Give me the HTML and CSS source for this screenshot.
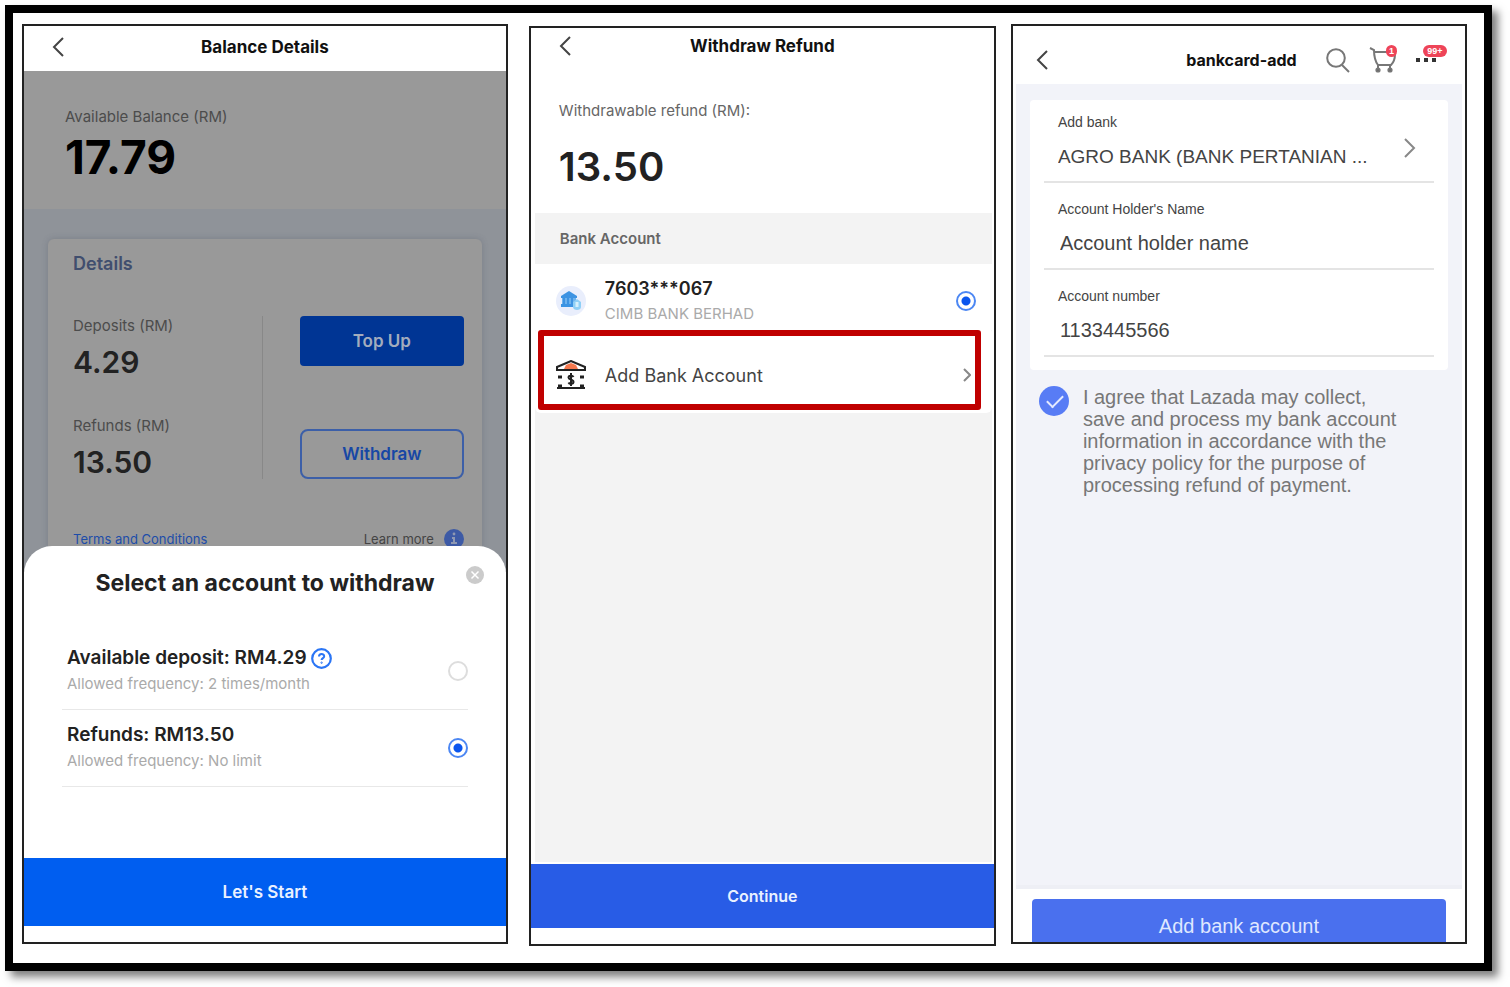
FILE: index.html
```html
<!DOCTYPE html>
<html lang="en">
	<head>
		<meta charset="utf-8">
		<meta name="viewport" content="width=device-width, initial-scale=1">
		<title>Withdraw refund</title>
		<link rel="stylesheet" href="styles.css">
	</head>
	<body>
		<div class="frame">

			<section class="screen balance">
				<header class="bar">
					<button class="back" aria-label="Back">
						<svg width="12" height="20" viewBox="0 0 12 20"><path d="M11 1 2 10l9 9"/></svg>
					</button>
					<h1>Balance Details</h1>
				</header>

				<div class="dim-top">
					<p class="label">Available Balance (RM)</p>
					<p class="total">17.79</p>
				</div>
				<div class="dim-body">
					<div class="details">
						<h2>Details</h2>
						<div class="split">
							<div class="amounts">
								<p class="label">Deposits (RM)</p>
								<p class="amount">4.29</p>
								<p class="label">Refunds (RM)</p>
								<p class="amount">13.50</p>
							</div>
							<div class="actions">
								<button class="topup">Top Up</button>
								<button class="withdraw">Withdraw</button>
							</div>
						</div>
						<div class="links">
							<a href="#">Terms and Conditions</a>
							<a href="#" class="learn">Learn more
								<svg width="20" height="20" viewBox="0 0 20 20">
									<circle cx="10" cy="10" r="10" fill="#3d5aa5"/>
									<path d="M8 9h2v5M7 14h6" fill="none" stroke="#8e98b2" stroke-width="2"/>
									<circle cx="10" cy="5" r="1.4" fill="#8e98b2"/>
								</svg>
							</a>
						</div>
					</div>
				</div>

				<form class="sheet">
					<button type="button" class="close" aria-label="Close">
						<svg width="18" height="18" viewBox="0 0 18 18">
							<circle cx="9" cy="9" r="9" fill="#cbcbcb"/>
							<path d="m5.5 5.5 7 7m0-7-7 7" stroke="#fff" stroke-width="1.5"/>
						</svg>
					</button>
					<h2>Select an account to withdraw</h2>
					<label class="option">
						<span class="text">
							<b>Available deposit: RM4.29
								<svg width="21" height="21" viewBox="0 0 21 21" fill="none" stroke="#2a75f5">
									<circle cx="10.5" cy="10.5" r="9.3" stroke-width="2.2"/>
									<path d="M8 8.600c0-3.400 5.200-3.200 5.200-.4 0 1.900-2.600 1.900-2.600 3.900" stroke-width="2"/>
									<circle cx="10.6" cy="14.7" r=".7"/>
								</svg>
							</b>
							<small>Allowed frequency: 2 times/month</small>
						</span>
						<input type="radio" name="account">
					</label>
					<label class="option">
						<span class="text">
							<b>Refunds: RM13.50</b>
							<small>Allowed frequency: No limit</small>
						</span>
						<input type="radio" name="account" checked>
					</label>
				</form>
				<button class="start">Let's Start</button>
			</section>

			<section class="screen refund">
				<header class="bar">
					<button class="back" aria-label="Back">
						<svg width="12" height="20" viewBox="0 0 12 20"><path d="M11 1 2 10l9 9"/></svg>
					</button>
					<h1>Withdraw Refund</h1>
				</header>
				<div class="refund-total">
					<p class="label">Withdrawable refund (RM):</p>
					<p class="total">13.50</p>
				</div>
				<div class="accounts">
					<h2>Bank Account</h2>
					<label class="account">
						<svg width="30" height="30" viewBox="0 0 30 30">
							<circle cx="15" cy="15" r="15" fill="#e9eefc"/>
							<path d="M5 10l8-5 8 5v2H5z" fill="#3d93e2"/>
							<path d="M6 12h14v7H6z" fill="#6cb2ee"/>
							<path d="M8 12v7m4-7v7m4-7v7" stroke="#3d93e2" stroke-width="2"/>
							<path d="M5 18h17v3H5z" fill="#3b94e4"/>
							<path d="m21 13 4 3v5c0 2-2 3-4 3s-4-1-4-3v-5z" fill="#8fd0f6"/>
							<path d="M21 16v5" stroke="#d5f0fc" stroke-width="3"/>
						</svg>
						<span class="text">
							<b>7603***067</b>
							<small>CIMB BANK BERHAD</small>
						</span>
						<input type="radio" name="bank" checked>
					</label>
					<a href="#" class="add">
						<svg width="30" height="30" viewBox="0 0 30 30" fill="none" stroke="#222" stroke-width="2">
							<path d="M1 10V7l14-6 14 6v3z" fill="#fff"/>
							<path d="m8 9 2-4 5-2 5 2 2 4z" fill="#f5784e" stroke="none"/>
							<path d="M1 10h28"/>
							<path d="M2 17h4m18 0h4M2 26h4m18 0h4" stroke-width="3"/>
							<path d="M1 28h28"/>
							<path d="M17.5 17c-1-2-5-1.500-5 .5 0 2.500 5 1.500 5 4.500 0 2-4 2.500-5 .5M15 13v13"/>
						</svg>
						<span>Add Bank Account</span>
						<svg class="go" width="8" height="14" viewBox="0 0 8 14"><path d="m1 1 6 6-6 6"/></svg>
					</a>
				</div>
				<button class="continue">Continue</button>
			</section>

			<section class="screen bankcard">
				<header class="bar">
					<button class="back" aria-label="Back">
						<svg width="12" height="20" viewBox="0 0 12 20"><path d="M11 1 2 10l9 9"/></svg>
					</button>
					<h1>bankcard-add</h1>
					<nav class="tools">
						<button aria-label="Search">
							<svg width="24" height="26" viewBox="0 0 24 26"><circle cx="10" cy="11" r="8.8"/><path d="m16 18 7 7"/></svg>
						</button>
						<button aria-label="Cart">
							<svg width="28" height="28" viewBox="0 0 28 28">
								<path d="m1 2 4 2c0 6 1 11 4 15h13c3-3 4-7 4-11M5 6h14"/>
								<path d="M9 19v3m12-3v3"/>
								<circle cx="9" cy="24" r="1.6" fill="#555"/>
								<circle cx="21" cy="24" r="1.6" fill="#555"/>
							</svg>
							<span class="badge">1</span>
						</button>
						<button aria-label="More">
							<svg width="20" height="28" viewBox="0 0 20 28"><path class="dots" d="M0 14h4m4 0h4m4 0h4"/></svg>
							<span class="badge more">99+</span>
						</button>
					</nav>
				</header>
				<form class="bank-form">
					<div class="fields">
						<div class="field">
							<label for="bank-name">Add bank</label>
							<select id="bank-name">
								<option>AGRO BANK (BANK PERTANIAN ...</option>
							</select>
							<svg class="go" width="12" height="20" viewBox="0 0 12 20"><path d="m1 1 9 9-9 9"/></svg>
						</div>
						<div class="field">
							<label for="holder">Account Holder's Name</label>
							<input type="text" id="holder" value="Account holder name">
						</div>
						<div class="field">
							<label for="number">Account number</label>
							<input type="text" id="number" value="1133445566">
						</div>
					</div>
					<div class="agree">
						<input type="checkbox" id="agree" checked>
						<label for="agree">I agree that Lazada may collect, save and process my bank account information in accordance with the privacy policy for the purpose of processing refund of payment.</label>
					</div>
				</form>
				<footer class="bank-footer">
					<button>Add bank account</button>
				</footer>
			</section>

		</div>
	</body>
</html>
```
FILE: styles.css
```css
* {
	box-sizing: border-box;
}
body {
	margin: 0;
	background: #fff;
	color: #222;
	font-family: Inter, sans-serif;
}
h1, h2, p {
	margin: 0;
}
button {
	border: 0;
	padding: 0;
	background: none;
	font-family: inherit;
}
a {
	color: inherit;
	text-decoration: none;
}
svg {
	flex: none;
}

.frame {
	display: flex;
	align-items: flex-start;
	margin: 5px 18px 18px 5px;
	padding: 11px 17px 17px 9px;
	border: 8px solid #000;
	box-shadow: 6px 6px 8px rgba(0, 0, 0, 0.5);
}
.screen {
	display: flex;
	flex-direction: column;
	min-width: 0;
	min-height: calc(100vh - 67px);
	border: 2px solid #222;
}
.balance {
	flex: 486 1 0;
	margin-right: 21px;
}
.refund {
	flex: 467 1 0;
	margin-top: 2px;
	margin-right: 15px;
}
.bankcard {
	flex: 456 1 0;
}

/* title bars */
.bar {
	display: grid;
	grid-template-columns: 1fr auto 1fr;
	align-items: center;
	padding: 0 28px 4px;
	height: 45px;
}
.bar h1 {
	font-size: 17px;
	line-height: 24px;
	color: #111;
}
.back {
	display: flex;
	justify-self: start;
}
.back path {
	fill: none;
	stroke: #444;
	stroke-width: 2;
}
.label {
	font-size: 15px;
	line-height: 20px;
	color: #666;
}

/* balance */
.dim-top {
	padding: 36px 41px 22px;
	background: #999;
}
.dim-top .label, .details .label {
	color: #4c4c4c;
}
.dim-top .total {
	font-size: 46px;
	font-weight: 700;
	line-height: 60px;
	color: #000;
}
.dim-body {
	padding: 30px 24px 0;
	background: #8f9399;
}
.details {
	padding: 15px 18px 23px 25px;
	border-radius: 6px 6px 0 0;
	background: #999;
	box-shadow: 0 0 6px rgba(70, 80, 95, 0.3);
}
.details h2 {
	font-size: 18px;
	font-weight: 600;
	line-height: 20px;
	color: #404e6e;
}
.split {
	display: flex;
	margin-top: 42px;
}
.amounts {
	flex: 1;
}
.amount {
	font-size: 30px;
	font-weight: 600;
	line-height: 52px;
}
.amount + .label {
	margin-top: 28px;
}
.actions {
	display: flex;
	flex-direction: column;
	gap: 63px;
	width: 202px;
	height: 163px;
	padding-left: 37px;
	border-left: 1px solid #888;
}
.actions button {
	height: 50px;
	border-radius: 4px;
	font-size: 17px;
	font-weight: 600;
}
.actions .topup {
	background: #003594;
	color: #a3acbd;
}
.actions .withdraw {
	border: 2px solid #3c5fa8;
	border-radius: 8px;
	color: #1747a5;
}
.links {
	display: flex;
	justify-content: space-between;
	margin-top: 41px;
	font-size: 13px;
	line-height: 20px;
	color: #1d4da9;
}
.learn {
	display: flex;
	align-items: center;
	gap: 10px;
	color: #444;
}

.sheet {
	position: relative;
	flex: 1;
	margin-top: -26px;
	padding: 21px 38px 0;
	border-radius: 28px 28px 0 0;
	background: #fff;
}
.sheet h2 {
	margin-bottom: 34px;
	font-size: 23px;
	line-height: 32px;
	text-align: center;
}
.close {
	position: absolute;
	top: 20px;
	right: 22px;
	display: flex;
}
.option {
	display: flex;
	align-items: center;
	padding: 12px 0 12px 5px;
	border-bottom: 1px solid #e8e8e8;
}
.text {
	flex: 1;
}
.text b, .text small {
	display: flex;
	align-items: center;
	gap: 4px;
	line-height: 26px;
}
.text b {
	font-size: 19px;
	font-weight: 600;
}
.text small {
	font-size: 15px;
	color: #aaa;
}
input[type='radio'] {
	appearance: none;
	width: 20px;
	height: 20px;
	margin: 0;
	border: 2px solid #ddd;
	border-radius: 50%;
}
input[type='radio']:checked {
	border-color: #4c87f3;
	background: radial-gradient(circle, #0a55ee 4px, #fff 5px);
}
.start, .continue {
	height: 68px;
	margin-bottom: 16px;
	background: #005ef0;
	color: #eaf1ff;
	font-size: 17px;
	font-weight: 600;
}

/* withdraw refund */
.refund .bar {
	height: 36px;
	padding-bottom: 0;
}
.refund-total {
	padding: 37px 28px 0;
}
.refund-total .total {
	font-size: 40px;
	font-weight: 600;
	line-height: 92px;
}
.accounts {
	flex: 1;
	margin: 0 2px 2px 4px;
	background: #f3f3f3;
}
.accounts h2 {
	padding: 0 25px;
	font-size: 15px;
	font-weight: 600;
	line-height: 51px;
	color: #666;
}
.account {
	display: flex;
	align-items: center;
	gap: 19px;
	height: 66px;
	padding: 8px 16px 0 21px;
	background: #fff;
}
.account .text b, .account .text small {
	line-height: 25px;
}
.account .text b {
	font-size: 18px;
}
.add {
	display: flex;
	align-items: center;
	gap: 19px;
	height: 80px;
	margin: 0 11px 0 3px;
	padding: 10px 4px 0 12px;
	border: 6px solid #c00000;
	border-radius: 3px;
	background: #fff;
	/* white row behind the red outline */
	box-shadow: 0 0 0 3px #fff, 8px 0 0 3px #fff;
	font-size: 18px;
	color: #444;
}
.go {
	fill: none;
	stroke: #888;
	stroke-width: 2;
}
.add .go {
	margin-left: auto;
}
.continue {
	height: 64px;
	background: #285ce6;
	font-size: 16px;
}

/* add bank card */
.bankcard {
	font-family: "Liberation Sans", Arial, sans-serif;
	color: #444;
}
.bankcard .bar {
	height: 58px;
	padding: 10px 18px 0 23px;
}
.bankcard h1 {
	font-family: Inter, sans-serif;
	font-size: 16px;
}
.tools {
	display: flex;
	align-items: center;
	justify-self: end;
	gap: 19px;
	padding-right: 11px;
}
.tools button {
	position: relative;
	display: flex;
}
.tools svg {
	fill: none;
	stroke: #777;
	stroke-width: 2;
}
.tools .dots {
	stroke: #333;
	stroke-width: 4;
}
.badge {
	position: absolute;
	top: -1px;
	right: 0;
	min-width: 11px;
	border-radius: 6px;
	background: #ee4458;
	color: #fff;
	font-size: 9px;
	font-weight: 700;
	line-height: 12px;
}
.badge.more {
	right: -11px;
	width: 24px;
}
.bank-form {
	flex: 1;
	margin: 0 3px;
	padding: 16px 14px;
	background: #f2f3f9;
	border-bottom: 4px solid #eeeff5;
}
.fields {
	display: grid;
	gap: 4px;
	padding: 0 14px 13px;
	border-radius: 4px;
	background: #fff;
}
.field {
	position: relative;
	display: flex;
	flex-direction: column;
	padding: 12px 14px 0;
	border-bottom: 2px solid #e4e4e4;
}
.field label {
	font-size: 14px;
	line-height: 20px;
}
.field select, .field input {
	appearance: none;
	height: 49px;
	padding: 0;
	border: 0;
	background: none;
	color: inherit;
	font-family: inherit;
	font-size: 20px;
}
.field select {
	font-size: 19px;
}
.field input {
	padding-left: 2px;
}
.field .go {
	position: absolute;
	top: 38px;
	right: 18px;
}
.agree {
	display: flex;
	gap: 14px;
	padding: 16px 20px 0 9px;
}
.agree label {
	max-width: 330px;
	font-size: 20px;
	line-height: 22px;
	color: #777;
}
.agree input {
	flex: none;
	appearance: none;
	width: 30px;
	height: 30px;
	margin: 0;
	border-radius: 50%;
	background: #587cf5;
}
.agree input::after {
	content: "";
	display: block;
	width: 14px;
	height: 7px;
	margin: 9px 8px;
	border: solid #e4eaff;
	border-width: 0 0 2px 2px;
	transform: rotate(-45deg);
}
.bank-footer {
	padding: 10px 19px 0;
}
.bank-footer button {
	width: 100%;
	height: 43px;
	padding-top: 12px;
	border-radius: 4px 4px 0 0;
	background: #4a70ee;
	color: #dfe7ff;
	font-size: 20px;
}
```
